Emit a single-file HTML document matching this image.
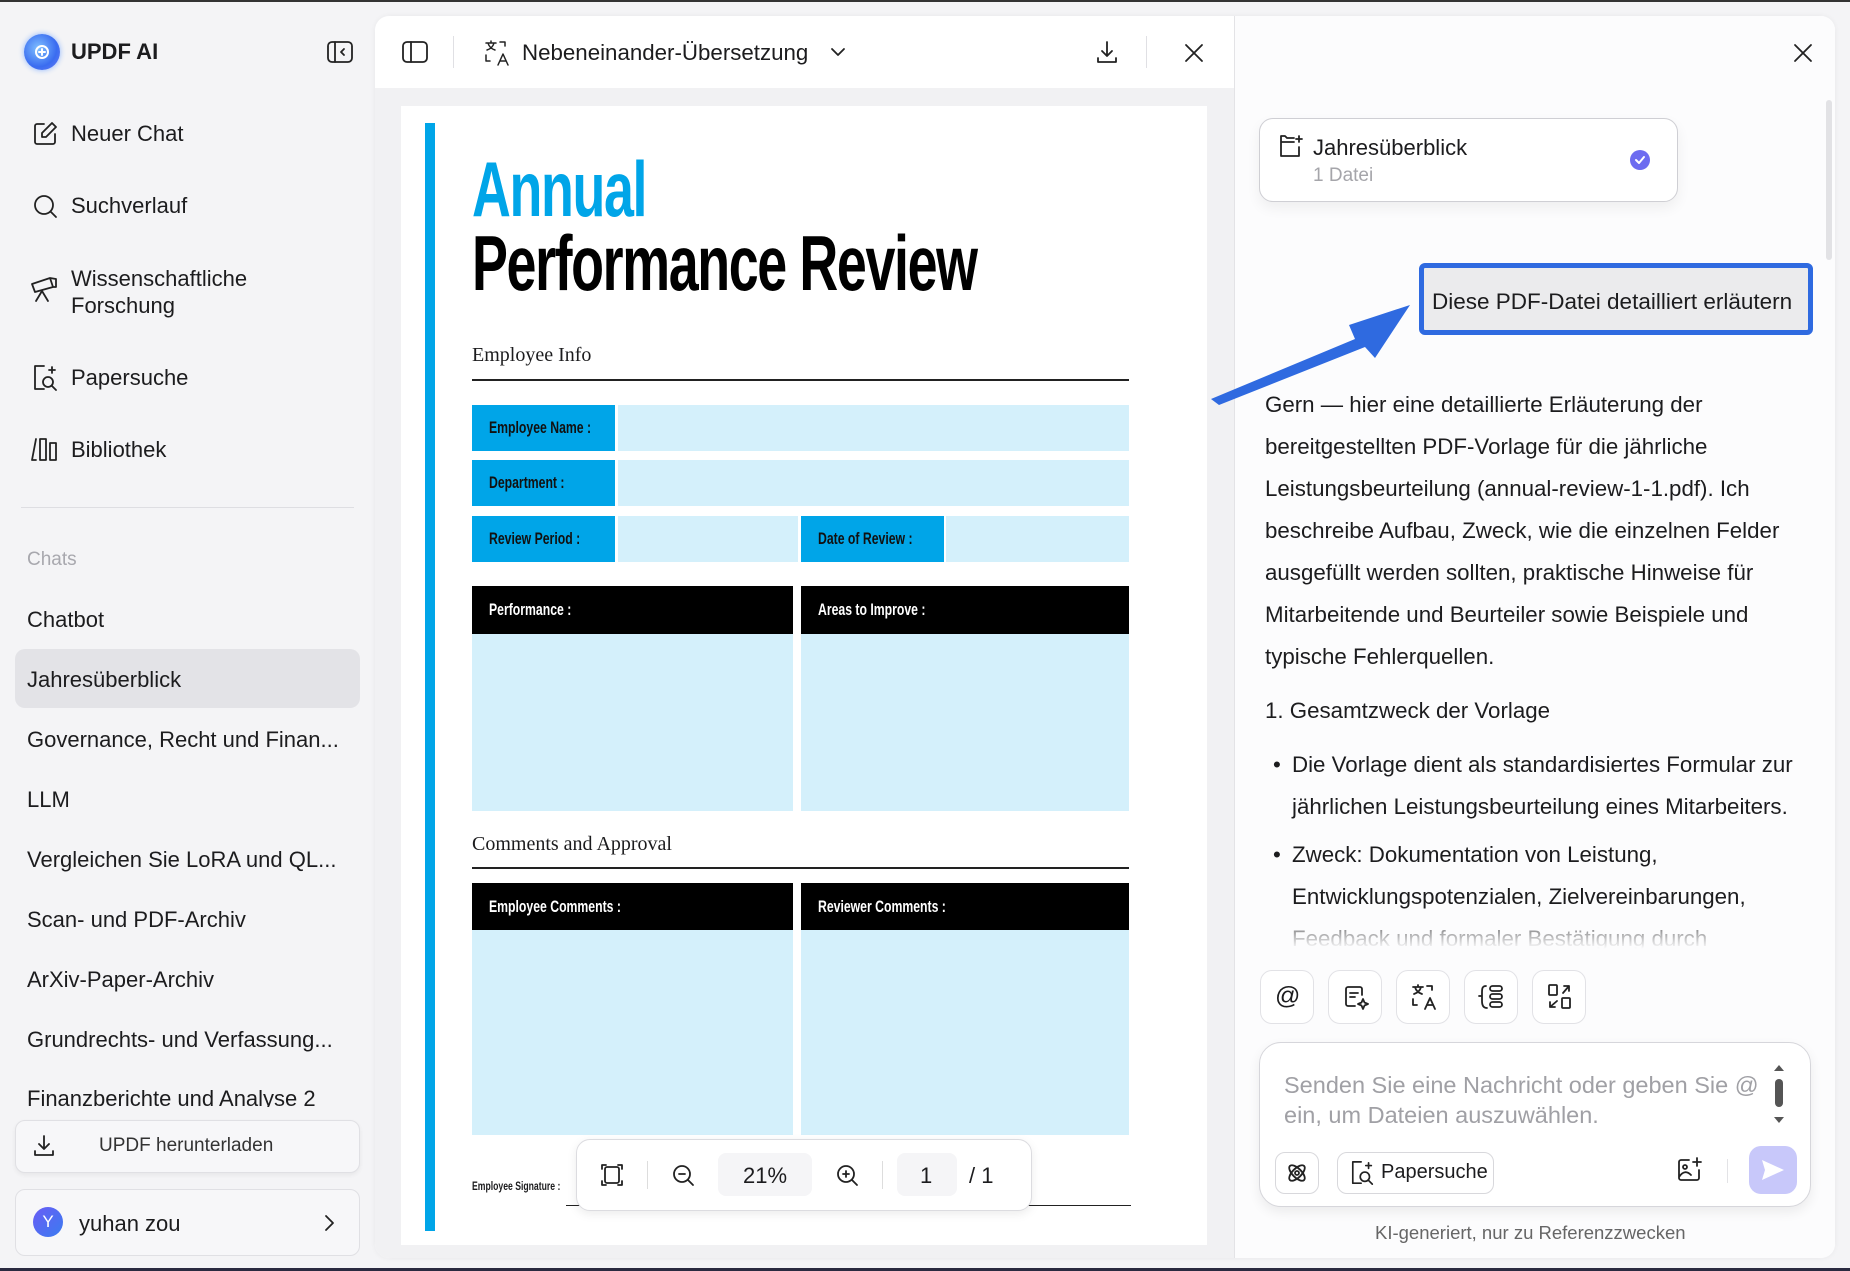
<!DOCTYPE html>
<html><head><meta charset="utf-8"><style>
*{margin:0;padding:0;box-sizing:border-box}
body{width:1850px;height:1271px;overflow:hidden;background:#f4f4f6;font-family:"Liberation Sans",sans-serif;color:#1c1c1e;position:relative}
.a{position:absolute}
.t{position:absolute;white-space:nowrap}
svg{position:absolute;fill:none;stroke:#222;stroke-width:1.8;stroke-linecap:round;stroke-linejoin:round}
.side{font-size:22px}
.chat{font-size:22px;left:27px}
.nar{font-family:"Liberation Sans",sans-serif;font-weight:bold}
.sq{display:inline-block;white-space:nowrap;transform:scaleX(.72);transform-origin:left}
.lbl{position:absolute;background:#00a5e8;color:#111;font-weight:bold;font-size:17px;padding-left:17px;display:flex;align-items:center;white-space:nowrap;overflow:hidden}
.fld{position:absolute;background:#d4f0fb}
.hd{position:absolute;background:#000;color:#fff;font-weight:bold;font-size:17px;padding-left:17px;display:flex;align-items:center;white-space:nowrap;overflow:hidden}
.ib{position:absolute;width:54px;height:54px;border:1px solid #e2e2e6;border-radius:12px;background:#fff;top:970px}
</style></head><body>
<div class="a" style="left:0;top:0;width:1850px;height:2px;background:#333"></div>
<div class="a" style="left:0;top:1268px;width:1850px;height:3px;background:#2a2a40"></div>

<!-- sidebar -->
<div class="a" style="left:24px;top:34px;width:36px;height:36px;border-radius:50%;background:radial-gradient(circle at 40% 40%,#7fc0ff,#3a6cf0 60%,#6a7cf5);box-shadow:0 0 6px #8ab4ff"></div>
<svg style="left:30px;top:40px" width="24" height="24" viewBox="0 0 24 24"><circle cx="12" cy="12" r="6" stroke="#fff" stroke-width="2"/><path d="M12 9v6M9 12h6" stroke="#fff" stroke-width="2"/></svg>
<div class="t" style="left:71px;top:39px;font-size:22px;font-weight:bold">UPDF AI</div>
<svg style="left:327px;top:41px" width="26" height="22" viewBox="0 0 26 22"><rect x="1" y="1" width="24" height="20" rx="4"/><path d="M8 1v20M17 8l-3 3 3 3"/></svg>

<svg style="left:32px;top:121px" width="26" height="26" viewBox="0 0 26 26"><path d="M12 3H5a2 2 0 0 0-2 2v16a2 2 0 0 0 2 2h16a2 2 0 0 0 2-2v-8"/><path d="M20 2l4 4-10 10h-4v-4z"/></svg>
<div class="t side" style="left:71px;top:121px">Neuer Chat</div>
<svg style="left:32px;top:193px" width="26" height="26" viewBox="0 0 26 26"><circle cx="12" cy="12" r="9"/><path d="M19 19l5 5"/></svg>
<div class="t side" style="left:71px;top:193px">Suchverlauf</div>
<svg style="left:30px;top:276px" width="28" height="28" viewBox="0 0 28 28"><path d="M2 8l18-6 3 9-18 5zM12 15l-6 10M12 15l6 10M20 2l6 1 0 8-3 0"/></svg>
<div class="t side" style="left:71px;top:265px;line-height:27px">Wissenschaftliche<br>Forschung</div>
<svg style="left:32px;top:364px" width="28" height="28" viewBox="0 0 28 28"><path d="M12 2H3v23h9"/><circle cx="16" cy="18" r="5"/><path d="M20 22l4 4M20 3v6M17 6h6"/></svg>
<div class="t side" style="left:71px;top:365px">Papersuche</div>
<svg style="left:30px;top:436px" width="30" height="26" viewBox="0 0 30 26"><path d="M6 3L2 24h4M10 3h6v21h-6zM20 7h6v17h-6z"/></svg>
<div class="t side" style="left:71px;top:437px">Bibliothek</div>
<div class="a" style="left:21px;top:507px;width:333px;height:1px;background:#dedee2"></div>
<div class="t" style="left:27px;top:549px;font-size:19px;color:#a8a8ae">Chats</div>
<div class="a" style="left:15px;top:649px;width:345px;height:59px;border-radius:10px;background:#e3e3e7"></div>
<div class="t chat" style="top:607px">Chatbot</div>
<div class="t chat" style="top:667px">Jahresüberblick</div>
<div class="t chat" style="top:727px">Governance, Recht und Finan...</div>
<div class="t chat" style="top:787px">LLM</div>
<div class="t chat" style="top:847px">Vergleichen Sie LoRA und QL...</div>
<div class="t chat" style="top:907px">Scan- und PDF-Archiv</div>
<div class="t chat" style="top:967px">ArXiv-Paper-Archiv</div>
<div class="t chat" style="top:1027px">Grundrechts- und Verfassung...</div>
<div class="a" style="left:0;top:1086px;width:370px;height:21px;overflow:hidden"><div class="t chat" style="top:0">Finanzberichte und Analyse 2</div></div>
<div class="a" style="left:15px;top:1120px;width:345px;height:53px;border-radius:10px;background:#f7f7f9;border:1px solid #e0e0e4;box-shadow:0 2px 5px rgba(0,0,0,.06)"></div>
<svg style="left:32px;top:1134px" width="24" height="24" viewBox="0 0 24 24"><path d="M12 2v13M7 10l5 5 5-5M3 17v4h18v-4"/></svg>
<div class="t" style="left:99px;top:1135px;font-size:19px;color:#333">UPDF herunterladen</div>
<div class="a" style="left:15px;top:1189px;width:345px;height:67px;border-radius:10px;background:#f7f7f9;border:1px solid #e0e0e4"></div>
<div class="a" style="left:33px;top:1207px;width:30px;height:30px;border-radius:50%;background:linear-gradient(135deg,#6a5cf5,#3a7cf0);color:#fff;font-size:17px;text-align:center;line-height:30px">Y</div>
<div class="t" style="left:79px;top:1211px;font-size:22px">yuhan zou</div>
<svg style="left:322px;top:1213px" width="14" height="20" viewBox="0 0 14 20"><path d="M4 3l7 7-7 7"/></svg>

<!-- main card -->
<div class="a" style="left:375px;top:16px;width:1460px;height:1242px;background:#fff;border-radius:14px;box-shadow:0 0 6px rgba(0,0,0,.05)"></div>
<div class="a" style="left:375px;top:88px;width:859px;height:1170px;background:#f1f1f3;border-bottom-left-radius:14px"></div>
<div class="a" style="left:1234px;top:16px;width:1px;height:1242px;background:#e3e3e6"></div>
<div class="a" style="left:1235px;top:16px;width:600px;height:1242px;background:#fcfcfd;border-radius:0 14px 14px 0"></div>

<!-- toolbar -->
<svg style="left:402px;top:41px" width="26" height="22" viewBox="0 0 26 22"><rect x="1" y="1" width="24" height="20" rx="4"/><path d="M9 1v20"/></svg>
<div class="a" style="left:453px;top:36px;width:1px;height:32px;background:#e0e0e4"></div>
<svg style="left:483px;top:39px;stroke-width:1.5" width="28" height="28" viewBox="0 0 28 28"><path d="M3 4h10M8 2v2M5 4c1 4 4 6 7 7M11 4c-1 4-4 6-7 7M17 3h5v4M3 16v6h4M15 26l5-11 5 11M17 22h6"/></svg>
<div class="t" style="left:522px;top:40px;font-size:22.3px">Nebeneinander-Übersetzung</div>
<svg style="left:830px;top:46px" width="16" height="12" viewBox="0 0 16 12"><path d="M2 3l6 6 6-6"/></svg>
<svg style="left:1095px;top:40px" width="24" height="24" viewBox="0 0 24 24"><path d="M12 2v14M7 11l5 5 5-5M3 18v4h18v-4"/></svg>
<div class="a" style="left:1146px;top:36px;width:1px;height:32px;background:#e0e0e4"></div>
<svg style="left:1184px;top:43px" width="20" height="20" viewBox="0 0 20 20"><path d="M2 2l16 16M18 2L2 18"/></svg>

<!-- pdf page -->
<div class="a" style="left:401px;top:106px;width:806px;height:1139px;background:#fff"></div>
<div class="a" style="left:425px;top:123px;width:10px;height:1108px;background:#00a5e8"></div>
<div class="t nar" style="left:472px;top:150px;font-size:78px;color:#00a5e8;letter-spacing:-2px;line-height:78px;transform:scaleX(.69);transform-origin:left">Annual</div>
<div class="t nar" style="left:472px;top:224px;font-size:78px;color:#000;letter-spacing:-2px;line-height:78px;transform:scaleX(.69);transform-origin:left">Performance Review</div>
<div class="t" style="left:472px;top:344px;font-family:'Liberation Serif',serif;font-size:20px">Employee Info</div>
<div class="a" style="left:472px;top:379px;width:657px;height:2px;background:#222"></div>
<div class="lbl" style="left:472px;top:405px;width:143px;height:46px"><span class="sq">Employee Name :</span></div><div class="fld" style="left:618px;top:405px;width:511px;height:46px"></div>
<div class="lbl" style="left:472px;top:460px;width:143px;height:46px"><span class="sq">Department :</span></div><div class="fld" style="left:618px;top:460px;width:511px;height:46px"></div>
<div class="lbl" style="left:472px;top:516px;width:143px;height:46px"><span class="sq">Review Period :</span></div><div class="fld" style="left:618px;top:516px;width:180px;height:46px"></div>
<div class="lbl" style="left:801px;top:516px;width:143px;height:46px"><span class="sq">Date of Review :</span></div><div class="fld" style="left:946px;top:516px;width:183px;height:46px"></div>
<div class="hd" style="left:472px;top:586px;width:321px;height:48px"><span class="sq">Performance :</span></div><div class="fld" style="left:472px;top:634px;width:321px;height:177px"></div>
<div class="hd" style="left:801px;top:586px;width:328px;height:48px"><span class="sq">Areas to Improve :</span></div><div class="fld" style="left:801px;top:634px;width:328px;height:177px"></div>
<div class="t" style="left:472px;top:833px;font-family:'Liberation Serif',serif;font-size:20px">Comments and Approval</div>
<div class="a" style="left:472px;top:867px;width:657px;height:2px;background:#222"></div>
<div class="hd" style="left:472px;top:883px;width:321px;height:47px"><span class="sq">Employee Comments :</span></div><div class="fld" style="left:472px;top:930px;width:321px;height:205px"></div>
<div class="hd" style="left:801px;top:883px;width:328px;height:47px"><span class="sq">Reviewer Comments :</span></div><div class="fld" style="left:801px;top:930px;width:328px;height:205px"></div>
<div class="t nar" style="left:472px;top:1179px;font-size:12px"><span class="sq">Employee Signature :</span></div>
<div class="a" style="left:566px;top:1205px;width:565px;height:1px;background:#222"></div>
<!-- zoom bar -->
<div class="a" style="left:576px;top:1139px;width:456px;height:72px;background:#fff;border:1px solid #dcdce0;border-radius:14px;box-shadow:0 3px 10px rgba(0,0,0,.08)"></div>
<svg style="left:600px;top:1163px" width="24" height="24" viewBox="0 0 24 24"><rect x="5" y="4" width="14" height="16" rx="2"/><path d="M2 6V2h4M18 2h4v4M2 18v4h4M22 18v4h-4"/></svg>
<div class="a" style="left:647px;top:1161px;width:1px;height:28px;background:#ddd"></div>
<svg style="left:672px;top:1164px" width="24" height="24" viewBox="0 0 24 24"><circle cx="10" cy="10" r="8"/><path d="M16 16l5 5M7 10h6"/></svg>
<div class="a" style="left:718px;top:1153px;width:94px;height:43px;border-radius:8px;background:#f5f5f7"></div>
<div class="t" style="left:743px;top:1163px;font-size:22px">21%</div>
<svg style="left:836px;top:1164px" width="24" height="24" viewBox="0 0 24 24"><circle cx="10" cy="10" r="8"/><path d="M16 16l5 5M7 10h6M10 7v6"/></svg>
<div class="a" style="left:882px;top:1161px;width:1px;height:28px;background:#ddd"></div>
<div class="a" style="left:897px;top:1153px;width:60px;height:43px;border-radius:8px;background:#f5f5f7"></div>
<div class="t" style="left:920px;top:1163px;font-size:22px">1</div>
<div class="t" style="left:969px;top:1163px;font-size:22px">/ 1</div>

<!-- right panel -->
<svg style="left:1793px;top:43px" width="20" height="20" viewBox="0 0 20 20"><path d="M2 2l16 16M18 2L2 18"/></svg>
<div class="a" style="left:1826px;top:100px;width:6px;height:160px;border-radius:3px;background:#e2e2e5"></div>
<div class="a" style="left:1259px;top:118px;width:419px;height:84px;border:1px solid #cfcfd4;border-radius:14px;background:#fff;box-shadow:0 6px 14px rgba(0,0,0,.06)"></div>
<svg style="left:1279px;top:135px" width="24" height="22" viewBox="0 0 24 22"><path d="M15 3H8L6 1H2v20h18v-9M2 7h13M20 1v6M17 4h6"/></svg>
<div class="t" style="left:1313px;top:135px;font-size:22px">Jahresüberblick</div>
<div class="t" style="left:1313px;top:165px;font-size:19px;color:#a5a5aa">1 Datei</div>
<div class="a" style="left:1630px;top:150px;width:20px;height:20px;border-radius:50%;background:#6d6cf0"></div>
<svg style="left:1634px;top:154px;stroke:#fff;stroke-width:2" width="12" height="12" viewBox="0 0 12 12"><path d="M2 6l3 3 5-6"/></svg>

<div class="a" style="left:1419px;top:263px;width:394px;height:72px;border:5px solid #2f6ae0;border-radius:6px;background:#ebebed"></div>
<div class="t" style="left:1432px;top:289px;font-size:22.5px">Diese PDF-Datei detailliert erläutern</div>
<svg style="left:1205px;top:295px;stroke:none" width="220" height="110" viewBox="0 0 220 110"><path d="M6 104L150 44L144 30L205 10L170 63L160 52L14 110Z" fill="#2f6ae0"/></svg>

<div class="a" style="left:1255px;top:384px;width:570px;height:566px;overflow:hidden">
<div style="position:relative;line-height:42px;font-size:22.3px;color:#1c1c1e">
<div style="padding-left:10px">Gern — hier eine detaillierte Erläuterung der<br>bereitgestellten PDF-Vorlage für die jährliche<br>Leistungsbeurteilung (annual-review-1-1.pdf). Ich<br>beschreibe Aufbau, Zweck, wie die einzelnen Felder<br>ausgefüllt werden sollten, praktische Hinweise für<br>Mitarbeitende und Beurteiler sowie Beispiele und<br>typische Fehlerquellen.</div>
<div style="padding-left:10px;margin-top:12px">1. Gesamtzweck der Vorlage</div>
<div style="padding-left:37px;margin-top:12px;position:relative"><span style="position:absolute;left:18px">•</span>Die Vorlage dient als standardisiertes Formular zur<br>jährlichen Leistungsbeurteilung eines Mitarbeiters.</div>
<div style="padding-left:37px;margin-top:6px;position:relative"><span style="position:absolute;left:18px">•</span>Zweck: Dokumentation von Leistung,<br>Entwicklungspotenzialen, Zielvereinbarungen,<br>Feedback und formaler Bestätigung durch</div>
</div></div>
<div class="a" style="left:1240px;top:908px;width:590px;height:48px;background:linear-gradient(rgba(252,252,253,0),#fcfcfd 85%)"></div>

<div class="ib" style="left:1260px"></div><div class="t" style="left:1275px;top:982px;font-size:25px">@</div>
<div class="ib" style="left:1328px"></div><svg style="left:1343px;top:984px" width="26" height="26" viewBox="0 0 26 26"><path d="M12 22H5a2 2 0 0 1-2-2V5a2 2 0 0 1 2-2h12a2 2 0 0 1 2 2v6M7 9h8M7 13h5M20 15l1.5 3.5L25 20l-3.5 1.5L20 25l-1.5-3.5L15 20l3.5-1.5z"/></svg>
<div class="ib" style="left:1396px"></div><svg style="left:1410px;top:983px" width="28" height="28" viewBox="0 0 28 28"><path d="M3 4h10M8 2v2M5 4c1 4 4 6 7 7M11 4c-1 4-4 6-7 7M17 3h5v4M3 16v6h4M15 26l5-11 5 11M17 22h6"/></svg>
<div class="ib" style="left:1464px"></div><svg style="left:1478px;top:983px" width="28" height="28" viewBox="0 0 28 28"><path d="M8 3C4 3 4 6 4 10v3H1M4 13v5c0 4 1 7 5 7"/><rect x="12" y="3" width="12" height="5" rx="2.5"/><rect x="12" y="11" width="12" height="5" rx="2.5"/><rect x="12" y="19" width="12" height="5" rx="2.5"/></svg>
<div class="ib" style="left:1532px"></div><svg style="left:1546px;top:983px" width="28" height="28" viewBox="0 0 28 28"><rect x="3" y="2" width="8" height="10" rx="1"/><rect x="16" y="15" width="8" height="10" rx="1"/><path d="M17 10l6-7M18 3h5v5M11 18l-7 6M4 19v5h5"/></svg>

<div class="a" style="left:1259px;top:1042px;width:552px;height:165px;border:1px solid #d6d6db;border-radius:22px;background:#fff;box-shadow:0 5px 12px rgba(0,0,0,.07)"></div>
<div class="t" style="left:1284px;top:1070px;font-size:23.5px;color:#a0a0a5;line-height:30px">Senden Sie eine Nachricht oder geben Sie @<br>ein, um Dateien auszuwählen.</div>
<div class="a" style="left:1774px;top:1065px;width:0;height:0;border:5px solid transparent;border-bottom:6px solid #555;border-top:none"></div>
<div class="a" style="left:1775px;top:1079px;width:8px;height:28px;border-radius:4px;background:#555"></div>
<div class="a" style="left:1774px;top:1117px;width:0;height:0;border:5px solid transparent;border-top:6px solid #555;border-bottom:none"></div>
<div class="a" style="left:1275px;top:1152px;width:44px;height:42px;border:1px solid #d8d8dc;border-radius:10px"></div>
<svg style="left:1285px;top:1161px" width="24" height="24" viewBox="0 0 24 24"><ellipse cx="12" cy="12" rx="10" ry="4.5" transform="rotate(45 12 12)"/><ellipse cx="12" cy="12" rx="10" ry="4.5" transform="rotate(-45 12 12)"/><circle cx="12" cy="12" r="2"/></svg>
<div class="a" style="left:1337px;top:1152px;width:157px;height:42px;border:1px solid #d8d8dc;border-radius:10px"></div>
<svg style="left:1350px;top:1160px" width="26" height="26" viewBox="0 0 28 28"><path d="M12 2H3v23h9"/><circle cx="16" cy="18" r="5"/><path d="M20 22l4 4M20 3v6M17 6h6"/></svg>
<div class="t" style="left:1381px;top:1161px;font-size:20px">Papersuche</div>
<svg style="left:1676px;top:1157px" width="26" height="26" viewBox="0 0 26 26"><path d="M13 3H5a2 2 0 0 0-2 2v16a2 2 0 0 0 2 2h16a2 2 0 0 0 2-2v-8M3 20c4-6 8-6 12-2M21 1v8M17 5h8"/><circle cx="9" cy="10" r="2"/></svg>
<div class="a" style="left:1727px;top:1159px;width:1px;height:24px;background:#e3e3e6"></div>
<div class="a" style="left:1749px;top:1146px;width:48px;height:48px;border-radius:12px;background:#c8c8fa"></div>
<svg style="left:1760px;top:1158px;stroke:none" width="26" height="24" viewBox="0 0 26 24"><path d="M2 2l22 10L2 22l3-10z" fill="#fff"/></svg>
<div class="t" style="left:1375px;top:1222px;font-size:18.5px;color:#666">KI-generiert, nur zu Referenzzwecken</div>
</body></html>
